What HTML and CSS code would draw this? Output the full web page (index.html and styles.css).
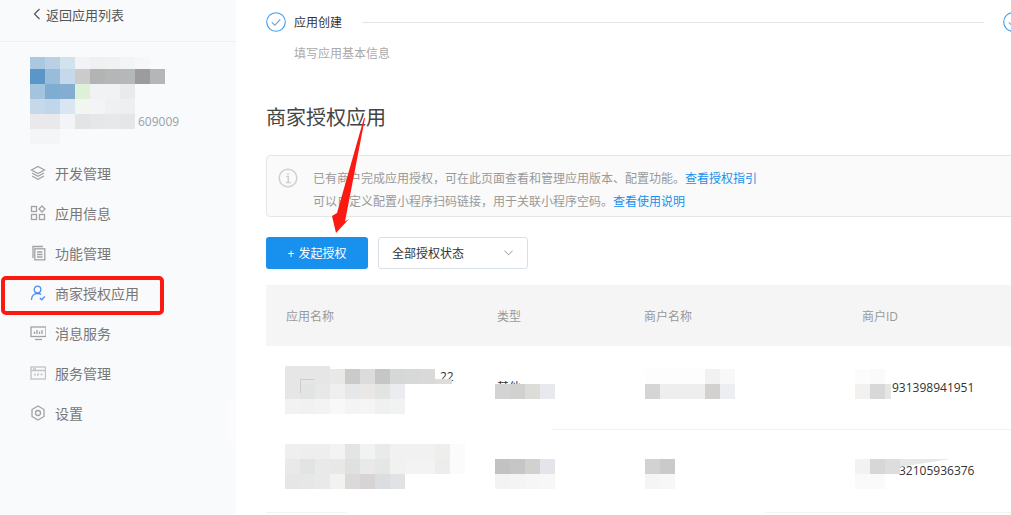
FILE: index.html
```html
<!DOCTYPE html>
<html lang="zh-CN">
  <head>
    <meta charset="UTF-8" />
    <meta name="viewport" content="width=device-width, initial-scale=1.0" />
    <title>商家授权应用</title>
    <link rel="stylesheet" href="styles.css">
  </head>
  <body>
    <div class="page">
      <aside class="sidebar">
        <a class="back-link">
          <svg class="back-icon" viewBox="0 0 8 12"><path d="M6.5 1 1.5 6l5 5" /></svg>
          返回应用列表
        </a>
        <div class="app-card">
          <div class="app-id">609009</div>
        </div>
        <nav class="nav">
          <a class="nav-item">
            <svg class="nav-icon" viewBox="0 0 16 16"><path d="M8 1.5 14.5 5 8 8.5 1.5 5z" /><path d="M2 8l6 3.3L14 8" /><path d="M2 11l6 3.3 6-3.3" /></svg>
            开发管理
          </a>
          <a class="nav-item">
            <svg class="nav-icon" viewBox="0 0 16 16"><rect x="1.5" y="1.5" width="5" height="5" /><path d="M12 1l3 3-3 3-3-3z" /><rect x="1.5" y="9.5" width="5" height="5" /><rect x="9.5" y="9.5" width="5" height="5" /></svg>
            应用信息
          </a>
          <a class="nav-item">
            <svg class="nav-icon" viewBox="0 0 16 16"><path d="M3 13V1.500h10" /><rect x="4.800" y="3.800" width="10" height="11" /><path d="M7 7h5.500M7 9.500h5.500M7 12h5.500" /></svg>
            功能管理
          </a>
          <a class="nav-item nav-item-active">
            <svg class="nav-icon nav-icon-blue" viewBox="0 0 16 16"><circle cx="7.500" cy="4.500" r="3.300" /><path d="M1.500 15c0-4 2.500-6.500 6-6.500 1.500 0 2.700.4 3.600 1.100" /><path d="M9.800 13l2 1.800 3-3.300" /></svg>
            商家授权应用
          </a>
          <a class="nav-item">
            <svg class="nav-icon" viewBox="0 0 16 16"><rect x="1" y="2" width="15" height="9.500" /><path d="M4.500 9V6.500M7 9V5M9.500 9V6.500M12 9V5" /><path d="M5 14.500h7" /></svg>
            消息服务
          </a>
          <a class="nav-item">
            <svg class="nav-icon nav-icon-light" viewBox="0 0 16 16"><rect x="1" y="2" width="14.500" height="12" /><path d="M1 5.500h14.500M3 3.800h3M4 9.500h2M7.500 11l1-3M10.500 9.500h2" /></svg>
            服务管理
          </a>
          <a class="nav-item">
            <svg class="nav-icon" viewBox="0 0 16 16"><path d="M8 1 14 4.500v7L8 15l-6-3.500v-7z" /><circle cx="8" cy="8" r="2.500" /></svg>
            设置
          </a>
        </nav>
      </aside>

      <main class="main">
        <div class="steps">
          <svg class="step-icon" viewBox="0 0 20 20"><circle cx="10" cy="10" r="9.300" /><path class="step-check" d="M5.800 10.300 8.800 13.200 14.300 7.500" /></svg>
          <span class="step-title">应用创建</span>
          <span class="step-line"></span>
          <svg class="step-icon" viewBox="0 0 20 20"><circle cx="10" cy="10" r="9.300" /><path class="step-check" d="M5.800 10.300 8.800 13.200 14.300 7.500" /></svg>
        </div>
        <p class="step-desc">填写应用基本信息</p>

        <h1 class="page-title">商家授权应用</h1>

        <div class="notice">
          <svg class="notice-icon" viewBox="0 0 20 20"><circle cx="10" cy="10" r="8.800" /><path d="M8.300 8.500H10.300V14.500M8 14.500h4.600" /><path d="M10 5v1.800" /></svg>
          <div class="notice-text">
            <p>已有商户完成应用授权，可在此页面查看和管理应用版本、配置功能。<a>查看授权指引</a></p>
            <p>可以自定义配置小程序扫码链接，用于关联小程序空码。<a>查看使用说明</a></p>
          </div>
        </div>

        <div class="toolbar">
          <button class="button">+ 发起授权</button>
          <div class="select">
            全部授权状态
            <svg class="select-arrow" viewBox="0 0 10 6"><path d="M.5.500 5 5 9.500.500" /></svg>
          </div>
        </div>

        <table class="app-table">
          <thead>
            <tr>
              <th class="col-name">应用名称</th>
              <th class="col-type">类型</th>
              <th class="col-merchant">商户名称</th>
              <th>商户ID</th>
            </tr>
          </thead>
          <tbody>
            <tr>
              <td><span class="name-tail">22</span></td>
              <td>其他</td>
              <td></td>
              <td class="merchant-id id-one">931398941951</td>
            </tr>
            <tr>
              <td></td>
              <td></td>
              <td></td>
              <td class="merchant-id id-two">32105936376</td>
            </tr>
          </tbody>
        </table>
      </main>
    </div>

    <!-- annotations and blur patches that were painted over the screenshot -->
    <div id="mosaics"></div>
    <span class="smear smear-side"></span>
    <span class="smear smear-line-one"></span>
    <span class="smear smear-line-two"></span>
    <span class="smear smear-tail"></span>
    <span class="smear smear-id"></span>
    <span class="slant"></span>
    <div class="mark-box"></div>
    <svg class="mark-arrow" viewBox="0 0 60 130"><path d="M35 3 15 106.500 19 104 6 118 2 101 7 98 34 3z" /></svg>
    <span class="thumb"></span>

    <script src="script.js"></script>
  </body>
</html>
```

FILE: styles.css
```css
* {
  box-sizing: border-box;
}
html,
body {
  margin: 0;
  height: 100%;
  overflow: hidden;
}
body {
  font-family: "Open Sans", "Noto Sans CJK SC", sans-serif;
  font-size: 12px;
  color: #333;
  background-color: #fff;
}
p {
  margin: 0;
}
a {
  cursor: pointer;
}
.page {
  display: flex;
  height: 515px;
}

/* sidebar */
.sidebar {
  width: 236px;
  flex: none;
  background-color: #f9fafc;
}
.back-link {
  display: flex;
  align-items: center;
  gap: 5px;
  height: 42px;
  padding: 0 0 13px 33px;
  font-size: 13px;
  color: #555;
  border-bottom: 1px solid #eff0f3;
}
.back-icon {
  width: 8px;
  height: 12px;
  fill: none;
  stroke: #555;
  stroke-width: 1.2;
}
.app-card {
  height: 111px;
  padding: 71px 0 0 138px;
}
.app-id {
  color: #9a9fa8;
}
.nav {
  display: flex;
  flex-direction: column;
}
.nav-item {
  display: flex;
  align-items: center;
  gap: 9px;
  height: 40px;
  padding-left: 30px;
  font-size: 14px;
  color: #777;
}
.nav-icon {
  width: 16px;
  height: 16px;
  flex: none;
  fill: none;
  stroke: #a2a2a2;
  stroke-width: 1.300;
}
.nav-icon-blue {
  stroke: #4c8fe8;
}
.nav-icon-light {
  stroke: #c2c2c2;
}

/* main column */
.main {
  flex: 1;
  min-width: 0;
  padding: 12px 0 0 30px;
  overflow: hidden;
}
.steps {
  display: flex;
  align-items: center;
  width: 790px;
  height: 20px;
}
.step-icon {
  width: 20px;
  height: 20px;
  flex: none;
  fill: none;
  stroke: #3d9ff0;
  stroke-width: 1.100;
}
.step-check {
  stroke: #7f9fdc;
}
.step-title {
  margin-left: 8px;
  font-size: 12px;
  color: #333;
}
.step-line {
  width: 622px;
  height: 1px;
  margin: 0 19px 0 20px;
  background-color: #e4e4e4;
}
.step-desc {
  margin: 13px 0 0 28px;
  line-height: 18px;
  color: #aaa;
}
.page-title {
  margin: 40px 0 0;
  font-size: 20px;
  font-weight: 400;
  line-height: 30px;
  color: #444;
}
.notice {
  display: flex;
  width: 800px;
  height: 62px;
  margin-top: 22px;
  padding: 11px 0 0 11px;
  background-color: #fafafa;
  border: 1px solid #e6e6e6;
  border-radius: 4px;
}
.notice-icon {
  width: 20px;
  height: 20px;
  margin-top: 1px;
  flex: none;
  fill: none;
  stroke: #cfcfcf;
  stroke-width: 1.500;
}
.notice-text {
  margin-left: 15px;
  line-height: 23px;
  color: #999;
}
.notice-text a {
  color: #1890ee;
}
.toolbar {
  display: flex;
  gap: 10px;
  margin-top: 20px;
}
.button {
  width: 102px;
  height: 32px;
  padding: 0;
  font: inherit;
  word-spacing: 1px;
  color: #fff;
  background-color: #1890ee;
  border: none;
  border-radius: 3px;
  cursor: pointer;
}
.select {
  display: flex;
  align-items: center;
  justify-content: space-between;
  width: 150px;
  height: 32px;
  padding: 0 14px 0 13px;
  color: #333;
  background-color: #fff;
  border: 1px solid #d9dfe6;
  border-radius: 3px;
}
.select-arrow {
  width: 9px;
  height: 6px;
  fill: none;
  stroke: #888;
  stroke-width: 1;
}
.app-table {
  width: 800px;
  margin-top: 16px;
  border-collapse: collapse;
  table-layout: fixed;
}
.app-table th {
  height: 61px;
  padding: 0 20px;
  font-weight: 400;
  text-align: left;
  color: #999;
  background-color: #f5f5f5;
}
.app-table td {
  position: relative;
  height: 83px;
  padding: 0 20px;
  border-bottom: 1px solid #f2f2f2;
}
.col-name {
  width: 211px;
}
.col-type {
  width: 147px;
}
.col-merchant {
  width: 218px;
}
.merchant-id {
  color: #333;
}
.app-table .id-one {
  padding-left: 50px;
}
.app-table .id-two {
  padding-left: 57px;
}
.name-tail {
  position: absolute;
  left: 174px;
  top: 24px;
  line-height: 14px;
  color: #333;
}

/* over the screenshot */
.mosaic {
  position: absolute;
  display: grid;
  grid-auto-rows: 15px;
  grid-template-columns: repeat(var(--cols), 15px);
}
.mosaic span {
  display: block;
}
.smear {
  position: absolute;
  background-color: #fff;
}
.smear-side {
  left: 226px;
  top: 400px;
  width: 10px;
  height: 42px;
  background-color: #fbfbfd;
}
.smear-line-one {
  left: 266px;
  top: 427px;
  width: 286px;
  height: 4px;
}
.smear-line-two {
  left: 347px;
  top: 510px;
  width: 418px;
  height: 4px;
}
.smear-tail {
  left: 435px;
  top: 379px;
  width: 17px;
  height: 5px;
  background-color: #dcdcdc;
}
.smear-id {
  left: 885px;
  top: 384px;
  width: 6px;
  height: 15px;
  background-color: #e6e6e6;
}
.slant {
  position: absolute;
  left: 900px;
  top: 459px;
  width: 50px;
  height: 8px;
  background-color: #e6e8e8;
  clip-path: polygon(0 0, 100% 0, 0 100%);
}
.mark-box {
  position: absolute;
  left: 1px;
  top: 276px;
  width: 163px;
  height: 39px;
  border: 4px solid #fb1a12;
  border-radius: 5px;
}
.mark-arrow {
  position: absolute;
  left: 330px;
  top: 115px;
  width: 60px;
  height: 130px;
  fill: #fb1a12;
}
.thumb {
  position: absolute;
  left: 300px;
  top: 379px;
  width: 14px;
  height: 14px;
  border-top: 1px solid #ccc;
  border-left: 1px solid #ccc;
}
```

FILE: script.js
```js
// blur patches: x, y of the top left corner, then one row of cell colours per line
var mosaics = [
  [30, 57, [
    ["#aac8e0", "#bad1e5", "#d3e2ef", "#f1f3f6", "#eef0f2", "#f0f1f3", "#f3f4f6", "#f6f7f9"]
  ]],
  [30, 69, [
    ["#5b96c8", "#9abcdb", "#c6d9ea", "#cbcbcb", "#b3b3b3", "#b5b7b6", "#b5b8b9", "#9c9c9d", "#b4b7b7"],
    ["#a3c4df", "#7fadd2", "#83aed2", "#dff0d8", "#f1f2f4", "#f1f2f4", "#e9eaeb"],
    ["#c5d9eb", "#c0d6ea", "#d9e5f0", "#f1f6f0", "#f3f4f6", "#eff0f2", "#eeeff1"],
    ["#e9e9ed", "#e9e9ed", "#f3f4f7", "#e3e4e6", "#e6e7e8", "#e7e8ea", "#e5e6e7"],
    ["#f4f5f7", "#f4f5f7", "#f9fafc"]
  ]],
  [285, 366, [["#e6e6e6", "#e6e6e6", "#e6e6e6"]]],
  [285, 369, [
    ["#e6e6e6", "#e6e6e6", "#e6e6e6", "#e8e8e6", "#c9caca", "#dcdcde", "#c6c6c6", "#d6d7d7", "#d7d8d8", "#d8d9d8"],
    ["#e6e6e6", "#e2e4e4", "#e8e8e8", "#efefef", "#e6e7e8", "#e9e8e7", "#e2e4e3", "#ebecef"],
    ["#f2f2f2", "#f1f1f1", "#f3f3f3", "#f8f8f8", "#f4f4f5", "#f5f5f4", "#f0f0f0", "#f1f2f2"]
  ]],
  [285, 444, [
    ["#efefef", "#eeeeee", "#eeeeee", "#f3f3f3", "#e3e5e5", "#f2f2f3", "#e9eaea", "#f1f1f2", "#f1f1f2", "#f0f1f0", "#eeeeed", "#fbfbfb"],
    ["#e9e9e7", "#e2e4e3", "#e9e9e9", "#eae8e6", "#dfe1e0", "#e9e9ea", "#e5e6e6", "#f1f1ef", "#f3f3f3", "#f3f3f3", "#ededed", "#fbfbfb"],
    ["#e6e6e6", "#e6e7e7", "#e9e9e9", "#f2f2f0", "#dbdad8", "#d6d4d5", "#dbdde0", "#e1e2e5"]
  ]],
  [495, 384, [["#d3d3d3", "#d1d1d0", "#dcdcd8", "#e8e9ee"]]],
  [495, 459, [
    ["#c2c2c2", "#c6c6c6", "#d2d1ce", "#e4e5ea"],
    ["#f3f3f3", "#f4f4f4", "#f6f6f6", "#f7f7f7"]
  ]],
  [645, 369, [
    ["#fdfdfd", "#fdfdfd", "#fdfdfd", "#fdfdfd", "#f1f1f1", "#f8f8f8"],
    ["#d5d5d5", "#eeeeee", "#eeeeee", "#eeeeee", "#d2d1cf", "#eceef1"]
  ]],
  [645, 459, [
    ["#d3d2d0", "#c9cacc"],
    ["#f5f5f5", "#f6f7f6"]
  ]],
  [855, 369, [
    ["#fcfcfc", "#fafafa"],
    ["#f2f1ef", "#d8d8d9"]
  ]],
  [855, 459, [
    ["#f3f2f0", "#d7d7d8", "#dcdede"],
    ["#fafafa", "#fafafa"]
  ]]
];

var layer = document.getElementById("mosaics");

mosaics.forEach(function (patch) {
  var rows = patch[2];
  var cols = Math.max.apply(null, rows.map(function (row) {
    return row.length;
  }));

  var box = document.createElement("div");
  box.className = "mosaic";
  box.style.left = patch[0] + "px";
  box.style.top = patch[1] + "px";
  box.style.setProperty("--cols", cols);

  rows.forEach(function (row) {
    for (var i = 0; i < cols; i++) {
      var cell = document.createElement("span");
      if (row[i]) {
        cell.style.backgroundColor = row[i];
      }
      box.appendChild(cell);
    }
  });

  layer.appendChild(box);
});
```
